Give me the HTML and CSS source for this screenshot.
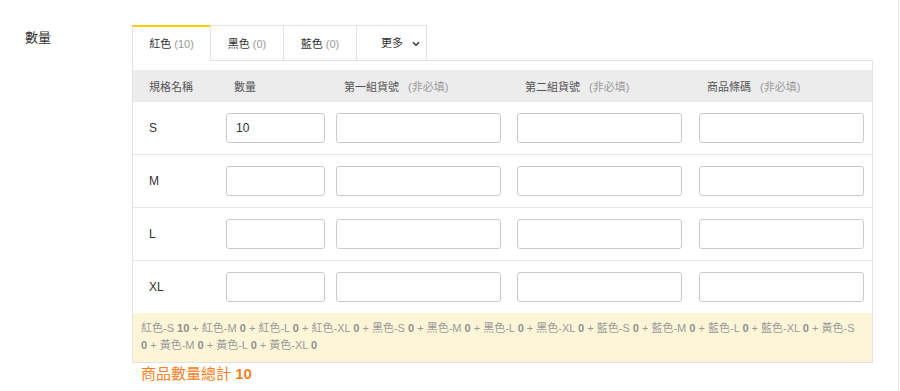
FILE: index.html
```html
<!DOCTYPE html>
<html lang="zh-Hant">
<head>
<meta charset="utf-8">
<link rel="stylesheet" href="styles.css">
</head>
<body>
<div class="page">
  <div class="field">
    <div class="field-label">數量</div>
    <div class="field-body">
      <div class="tabs">
        <div class="tab tab-active">紅色 <span class="tab-count">(10)</span></div>
        <div class="tab">黑色 <span class="tab-count">(0)</span></div>
        <div class="tab">藍色 <span class="tab-count">(0)</span></div>
        <div class="tab tab-more">更多
          <svg class="chevron" width="8" height="6" viewBox="0 0 8 6"><path d="M1 1.2l3 3 3-3" fill="none" stroke="#333" stroke-width="1.5"/></svg>
        </div>
        <div class="tab-fill"></div>
      </div>
      <div class="panel">
        <div class="grid grid-head">
          <div class="cell cell-name">規格名稱</div>
          <div class="cell cell-in">數量</div>
          <div class="cell cell-in">第一組貨號<span class="opt">(非必填)</span></div>
          <div class="cell cell-in">第二組貨號<span class="opt">(非必填)</span></div>
          <div class="cell cell-in">商品條碼<span class="opt">(非必填)</span></div>
        </div>
        <div class="grid grid-row">
          <div class="cell cell-name">S</div>
          <div class="cell"><input class="inp inp-qty" type="text" value="10"></div>
          <div class="cell"><input class="inp" type="text"></div>
          <div class="cell"><input class="inp" type="text"></div>
          <div class="cell"><input class="inp" type="text"></div>
        </div>
        <div class="grid grid-row">
          <div class="cell cell-name">M</div>
          <div class="cell"><input class="inp inp-qty" type="text"></div>
          <div class="cell"><input class="inp" type="text"></div>
          <div class="cell"><input class="inp" type="text"></div>
          <div class="cell"><input class="inp" type="text"></div>
        </div>
        <div class="grid grid-row">
          <div class="cell cell-name">L</div>
          <div class="cell"><input class="inp inp-qty" type="text"></div>
          <div class="cell"><input class="inp" type="text"></div>
          <div class="cell"><input class="inp" type="text"></div>
          <div class="cell"><input class="inp" type="text"></div>
        </div>
        <div class="grid grid-row">
          <div class="cell cell-name">XL</div>
          <div class="cell"><input class="inp inp-qty" type="text"></div>
          <div class="cell"><input class="inp" type="text"></div>
          <div class="cell"><input class="inp" type="text"></div>
          <div class="cell"><input class="inp" type="text"></div>
        </div>
        <div class="summary">紅色-S <b>10</b> + 紅色-M <b>0</b> + 紅色-L <b>0</b> + 紅色-XL <b>0</b> + 黑色-S <b>0</b> + 黑色-M <b>0</b> + 黑色-L <b>0</b> + 黑色-XL <b>0</b> + 藍色-S <b>0</b> + 藍色-M <b>0</b> + 藍色-L <b>0</b> + 藍色-XL <b>0</b> + 黃色-S <b>0</b> + 黃色-M <b>0</b> + 黃色-L <b>0</b> + 黃色-XL <b>0</b></div>
      </div>
      <div class="total">商品數量總計 <b>10</b></div>
    </div>
  </div>
</div>
</body>
</html>
```
FILE: styles.css
```css
* { box-sizing: border-box; }
html, body { margin: 0; padding: 0; background: #fff; }
body {
  font-family: "Liberation Sans", "Noto Sans CJK TC", sans-serif;
  color: #333;
}
.page {
  width: 899px;
  height: 391px;
  border-right: 1px solid #e8e8e8;
  padding-top: 25px;
}
.field { display: flex; }
.field-label {
  width: 132px;
  padding-left: 25px;
  padding-top: 3px;
  font-size: 13px;
  line-height: 20px;
  color: #333;
}
.field-body { width: 741px; }
.tabs {
  display: flex;
  height: 36px;
}
.tab {
  height: 36px;
  border-top: 1px solid #e3e3e3;
  border-left: 1px solid #e3e3e3;
  border-bottom: 1px solid #e3e3e3;
  font-size: 11px;
  line-height: 36px;
  text-align: center;
  color: #333;
  white-space: nowrap;
}
.tab:nth-child(1) { width: 78px; }
.tab:nth-child(2) { width: 73px; }
.tab:nth-child(3) { width: 73px; }
.tab-active {
  border-top: 2px solid #ffcb05;
  border-bottom-color: #fff;
  line-height: 35px;
}
.tab-count { color: #999; }
.tab-more {
  width: 71px;
  border-right: 1px solid #e3e3e3;
  padding-left: 24px;
  text-align: left;
  display: flex;
  align-items: center;
  gap: 9px;
  line-height: 20px;
}
.chevron { display: block; margin-top: 1px; }
.tab-fill {
  flex: 1;
  border-bottom: 1px solid #e3e3e3;
}
.panel {
  border-left: 1px solid #e3e3e3;
  border-right: 1px solid #e3e3e3;
  border-bottom: 1px solid #e3e3e3;
  padding-top: 9px;
}
.grid {
  display: grid;
  grid-template-columns: 93px 110px 181px 182px 173px;
  align-items: center;
}
.grid-head {
  height: 32px;
  background: #ececec;
  font-size: 11px;
  color: #555;
}
.grid-row { height: 52px; }
.grid-row + .grid-row { height: 53px; border-top: 1px solid #e6e6e6; }
.cell-name { padding-left: 16px; font-size: 12px; color: #333; }
.grid-head .cell-name { font-size: 11px; color: #555; }
.cell-in { padding-left: 8px; }
.opt { color: #999; margin-left: 9px; }
.inp {
  display: block;
  width: 165px;
  height: 30px;
  border: 1px solid #c9c9cf;
  border-radius: 3px;
  padding: 0 9px;
  font-family: "Liberation Sans", sans-serif;
  font-size: 12px;
  color: #333;
  background: #fff;
  outline: none;
}
.inp-qty { width: 99px; }
.summary {
  background: #fdf5d8;
  padding: 7px 12px 8px 8px;
  font-size: 11px;
  line-height: 17px;
  color: #9a9a9a;
}
.summary b { color: #8f8f8f; }
.total {
  padding-left: 9px;
  font-size: 15px;
  line-height: 22px;
  color: #f7811e;
}
```
